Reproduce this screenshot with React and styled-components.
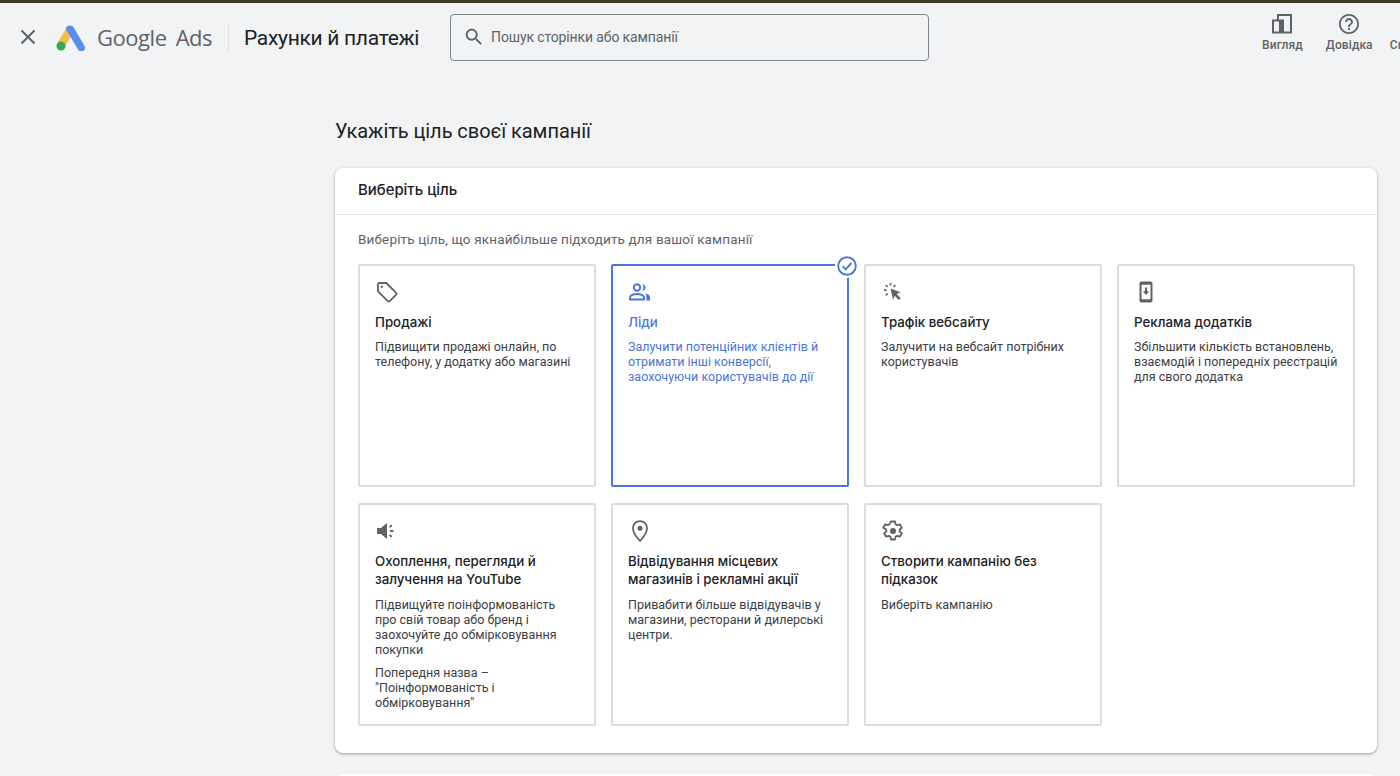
import React from 'react'
import styled, { createGlobalStyle } from 'styled-components'

const GlobalStyle = createGlobalStyle`
    html, body {
        margin: 0;
        height: 100%;
        overflow: hidden;
        background: #f1f3f4;
        font-family: Roboto, "Noto Sans", sans-serif;
    }
`

const goals = [
    {
        key: 'sales',
        title: 'Продажі',
        text: ['Підвищити продажі онлайн, по телефону, у додатку або магазині'],
        icon: (
            <>
                <path d="M3 4.2v7.1l9.9 9.9c.5.5 1.3.5 1.8 0l6.5-6.5c.5-.5.5-1.3 0-1.8L11.3 3H4.2C3.5 3 3 3.5 3 4.2z" fill="none" stroke="currentColor" strokeWidth="1.8" strokeLinejoin="round" />
                <circle cx="6.8" cy="6.8" r="1.2" fill="currentColor" />
            </>
        ),
    },
    {
        key: 'leads',
        title: 'Ліди',
        selected: true,
        text: ['Залучити потенційних клієнтів й отримати інші конверсії, заохочуючи користувачів до дії'],
        icon: (
            <>
                <circle cx="9" cy="7.5" r="3.2" fill="none" stroke="currentColor" strokeWidth="2" />
                <path d="M2 19.500v-2.100c0-2.200 3.600-3.500 7-3.500s7 1.300 7 3.500v2.100H2z" fill="none" stroke="currentColor" strokeWidth="2" strokeLinejoin="round" />
                <path d="M14.200 4.300c2 .2 3.400 1.500 3.400 3.300s-1.400 3.100-3.400 3.300c.8-.9 1.200-2 1.200-3.300s-.4-2.400-1.200-3.300zM17.300 13.600c2.400.5 4.700 1.600 4.700 3.600v3.300h-3.600v-3.300c0-1.500-.4-2.700-1.100-3.600z" fill="currentColor" />
            </>
        ),
    },
    {
        key: 'traffic',
        title: 'Трафік вебсайту',
        text: ['Залучити на вебсайт потрібних користувачів'],
        icon: (
            <>
                <path d="M9.500 8.500l10 3.800-3.900 1.600 4.200 4.300-1.900 1.900-4.200-4.300-1.600 3.900z" fill="currentColor" />
                <path d="M9.600 3v2.600M4.800 5l1.800 1.800M3 10.200h2.600M4.800 15.400l1.800-1.800M14.400 5l-1.800 1.800" fill="none" stroke="currentColor" strokeWidth="1.700" />
            </>
        ),
    },
    {
        key: 'apps',
        title: 'Реклама додатків',
        text: ['Збільшити кількість встановлень, взаємодій і попередніх реєстрацій для свого додатка'],
        icon: (
            <>
                <path fillRule="evenodd" d="M7.500 1.500h9c1.100 0 2 .9 2 2v17c0 1.100-.9 2-2 2h-9c-1.100 0-2-.9-2-2v-17c0-1.100.9-2 2-2zm0 3.200v14.600h9V4.700h-9z" fill="currentColor" />
                <path d="M11 7.500h2v3.700h2.200L12 15l-3.200-3.800H11z" fill="currentColor" />
            </>
        ),
    },
    {
        key: 'reach',
        title: 'Охоплення, перегляди й залучення на YouTube',
        text: [
            'Підвищуйте поінформованість про свій товар або бренд і заохочуйте до обмірковування покупки',
            'Попередня назва – "Поінформованість і обмірковування"',
        ],
        icon: (
            <>
                <path d="M2 9v6h4l6 5V4L6 9H2z" fill="currentColor" />
                <path d="M14.500 8l2.400-1.700M15 12h3.400M14.500 16l2.400 1.700" fill="none" stroke="currentColor" strokeWidth="1.800" />
            </>
        ),
    },
    {
        key: 'visits',
        title: 'Відвідування місцевих магазинів і рекламні акції',
        text: ['Привабити більше відвідувачів у магазини, ресторани й дилерські центри.'],
        icon: (
            <>
                <path d="M12 2.200c-3.900 0-7 3.100-7 7 0 5.100 7 12.800 7 12.800s7-7.700 7-12.800c0-3.900-3.100-7-7-7z" fill="none" stroke="currentColor" strokeWidth="1.800" strokeLinejoin="round" />
                <circle cx="12" cy="9.200" r="2.500" fill="currentColor" />
            </>
        ),
    },
    {
        key: 'custom',
        title: 'Створити кампанію без підказок',
        text: ['Виберіть кампанію'],
        icon: (
            <>
                <path d="M10 2.500h4l.5 2.700 1.700 1 2.600-.9 2 3.400-2.100 1.800v2l2.100 1.800-2 3.400-2.600-.9-1.700 1-.5 2.700h-4l-.5-2.700-1.700-1-2.600.9-2-3.400 2.100-1.800v-2L2.200 8.700l2-3.400 2.600.9 1.700-1z" fill="none" stroke="currentColor" strokeWidth="1.800" strokeLinejoin="round" />
                <circle cx="12" cy="12" r="3" fill="currentColor" />
            </>
        ),
    },
]

function App() {
    return (
        <>
            <GlobalStyle />
            <Page>
                <TopStrip />
                <Header>
                    <CloseButton aria-label="Закрити">
                        <svg width="24" height="24" viewBox="0 0 24 24">
                            <path d="M5.500 5.500l13 13M18.500 5.500l-13 13" stroke="currentColor" strokeWidth="2" />
                        </svg>
                    </CloseButton>
                    <Logo width="30" height="26" viewBox="0 0 30 26">
                        <path d="M10.600 2.400L1.200 18.600l7.200 4.200 9.400-16.200z" fill="#f4bd42" />
                        <path d="M10.800 5.800c-2-3.400.2-5.300 3.400-5.300 1.600 0 2.700.7 3.600 2.200l10.700 18.400c1 1.800.4 3.900-1.400 4.900s-3.900.4-4.900-1.300z" fill="#5b8def" />
                        <circle cx="5" cy="21" r="4.500" fill="#34a853" />
                    </Logo>
                    <Brand>Google<BrandAds>Ads</BrandAds></Brand>
                    <Divider />
                    <PageTitle>Рахунки й платежі</PageTitle>
                    <SearchBox>
                        <svg width="22" height="22" viewBox="0 0 24 24">
                            <path d="M15.500 14h-.8l-.3-.3c1-1.100 1.600-2.600 1.600-4.200C16 5.900 13.100 3 9.500 3S3 5.900 3 9.500 5.900 16 9.500 16c1.600 0 3.100-.6 4.200-1.600l.3.3v.8l5 5 1.500-1.500-5-5zm-6 0C7 14 5 12 5 9.500S7 5 9.500 5 14 7 14 9.500 12 14 9.500 14z" fill="#5f6368" />
                        </svg>
                        <SearchText>Пошук сторінки або кампанії</SearchText>
                    </SearchBox>
                    <Tools>
                        <ToolButton>
                            <svg width="24" height="24" viewBox="0 0 24 24">
                                <path fillRule="evenodd" d="M2 21.500V7.500h5V2h15v19.500H2zm2-2h5V9.500H4v10zM9 4v3.500h5V4H9zm5 1.500v14h6V4h-6z" fill="#5f6368" />
                                <path d="M9 9.500h5v10H9z" fill="#5f6368" />
                            </svg>
                            Вигляд
                        </ToolButton>
                        <ToolButton $wide>
                            <svg width="24" height="24" viewBox="0 0 24 24">
                                <path d="M12 2C6.480 2 2 6.480 2 12s4.480 10 10 10 10-4.480 10-10S17.520 2 12 2zm0 18.200c-4.520 0-8.200-3.680-8.200-8.200S7.480 3.800 12 3.800s8.200 3.680 8.200 8.200-3.680 8.200-8.200 8.200zM11 16h2v2h-2zm1-10c-2.200 0-4 1.800-4 4h2c0-1.100.9-2 2-2s2 .9 2 2c0 2-3 1.750-3 5h2c0-2.250 3-2.500 3-5 0-2.200-1.800-4-4-4z" fill="#5f6368" />
                            </svg>
                            Довідка
                        </ToolButton>
                        <ToolButton>
                            <Blank />
                            Сповіщення
                        </ToolButton>
                    </Tools>
                </Header>
                <Main>
                    <Heading>Укажіть ціль своєї кампанії</Heading>
                    <Card>
                        <CardHeader>Виберіть ціль</CardHeader>
                        <CardBody>
                            <Hint>Виберіть ціль, що якнайбільше підходить для вашої кампанії</Hint>
                            <GoalGrid>
                                {goals.map(goal => (
                                    <Goal key={goal.key} $selected={goal.selected}>
                                        {goal.selected && (
                                            <CheckBadge>
                                                <svg width="20" height="20" viewBox="0 0 20 20">
                                                    <circle cx="10" cy="10" r="8.800" fill="#fff" stroke="#4a76d9" strokeWidth="1.900" />
                                                    <path d="M5.600 10.200l3.100 3.100 5.700-6.300" fill="none" stroke="#4a76d9" strokeWidth="1.900" />
                                                </svg>
                                            </CheckBadge>
                                        )}
                                        <GoalIcon $selected={goal.selected} width="24" height="24" viewBox="0 0 24 24">{goal.icon}</GoalIcon>
                                        <GoalTitle $selected={goal.selected}>{goal.title}</GoalTitle>
                                        {goal.text.map(line => <GoalText key={line}>{line}</GoalText>)}
                                    </Goal>
                                ))}
                            </GoalGrid>
                        </CardBody>
                    </Card>
                    <NextCard />
                </Main>
            </Page>
        </>
    )
}

export default App

const Page = styled.div`
    height: 776px;
    overflow: hidden;
    background: #f1f3f4;
    color: #202124;
`
const TopStrip = styled.div`
    height: 3px;
    background: #3d3826;
`
const Header = styled.header`
    height: 69px;
    display: flex;
    align-items: center;
    padding-left: 16px;
    box-sizing: border-box;
    overflow: hidden;
`
const CloseButton = styled.div`
    flex: none;
    width: 24px;
    height: 24px;
    color: #5f6368;
    margin-bottom: 1px;
`
const Logo = styled.svg`
    margin-left: 16px;
    flex: none;
`
const Brand = styled.div`
    flex: none;
    width: 115px;
    margin-left: 11px;
    margin-bottom: 2px;
    font-family: "Open Sans", sans-serif;
    font-size: 22px;
    letter-spacing: -0.450px;
    color: #5f6368;
    white-space: nowrap;
`
const BrandAds = styled.span`
    margin-left: 9px;
`
const Divider = styled.div`
    flex: none;
    width: 1px;
    height: 30px;
    margin-left: 16px;
    background: #e0e2e5;
`
const PageTitle = styled.div`
    flex: none;
    margin-left: 15px;
    font-size: 21px;
    letter-spacing: -0.300px;
    color: #202124;
    white-space: nowrap;
`
const SearchBox = styled.div`
    flex: none;
    width: 479px;
    height: 47px;
    box-sizing: border-box;
    margin-left: 31px;
    display: flex;
    align-items: center;
    gap: 6px;
    padding-left: 12px;
    border: 1px solid #80868b;
    border-radius: 4px;
    margin-bottom: 1px;
`
const SearchText = styled.span`
    font-size: 14px;
    letter-spacing: -0.130px;
    color: #5f6368;
`
const Tools = styled.div`
    flex: none;
    margin-left: 333px;
    margin-bottom: 11px;
    display: flex;
    gap: 17px;
`
const ToolButton = styled.div`
    display: flex;
    flex-direction: column;
    align-items: center;
    gap: 2px;
    margin-left: ${p => p.$wide ? '6px' : '0'};
    font-size: 12px;
    line-height: 14px;
    font-weight: 500;
    letter-spacing: 0.100px;
    color: #5f6368;
    white-space: nowrap;
`
const Blank = styled.div`
    height: 24px;
`
const Main = styled.main`
    padding-left: 335px;
    padding-right: 23px;
`
const Heading = styled.h1`
    margin: 0;
    padding-top: 46px;
    height: 50px;
    font-size: 20px;
    line-height: 26px;
    font-weight: 400;
    letter-spacing: -0.050px;
    color: #202124;
`
const Card = styled.section`
    height: 585px;
    box-sizing: border-box;
    background: #fff;
    border-radius: 8px;
    box-shadow: 0 1px 2px rgba(60, 64, 67, 0.3), 0 1px 3px 1px rgba(60, 64, 67, 0.15);
`
const CardHeader = styled.div`
    height: 47px;
    box-sizing: border-box;
    padding: 0 23px 2px;
    display: flex;
    align-items: center;
    border-bottom: 1px solid #e8eaed;
    font-family: Inter, Roboto, sans-serif;
    font-size: 14.900px;
    font-weight: 500;
    color: #202124;
`
const CardBody = styled.div`
    padding: 0 23px;
`
const Hint = styled.div`
    height: 49px;
    box-sizing: border-box;
    padding-bottom: 2px;
    display: flex;
    align-items: center;
    font-size: 13.500px;
    letter-spacing: 0.150px;
    color: #5f6368;
`
const GoalGrid = styled.div`
    display: grid;
    grid-template-columns: repeat(4, 238px);
    grid-auto-rows: 223px;
    column-gap: 15px;
    row-gap: 16px;
`
const Goal = styled.div`
    position: relative;
    box-sizing: border-box;
    padding: 14px 15px 0 15px;
    border: ${p => p.$selected ? '2px solid #4a76d9' : '2px solid #dadce0'};
    border-radius: 2px;
    color: ${p => p.$selected ? '#4a76d9' : '#3c4043'};
`
const CheckBadge = styled.div`
    position: absolute;
    top: -12px;
    right: -12px;
    padding: 2px;
    width: 20px;
    height: 20px;
    background: #fff;
    border-radius: 50%;
    line-height: 0;
`
const GoalIcon = styled.svg`
    display: block;
    color: ${p => p.$selected ? '#4a76d9' : '#5f6368'};
`
const GoalTitle = styled.div`
    margin-top: 8.500px;
    font-family: Inter, Roboto, sans-serif;
    font-size: 13.300px;
    line-height: 18.500px;
    font-weight: 500;
    color: ${p => p.$selected ? '#4a76d9' : '#202124'};
`
const GoalText = styled.p`
    margin: 8px 0 0;
    font-size: 12.500px;
    line-height: 15px;
    letter-spacing: 0;
`
const NextCard = styled.div`
    height: 20px;
    margin-top: 21px;
    background: #fff;
    border-radius: 8px 8px 0 0;
    box-shadow: 0 1px 2px rgba(60, 64, 67, 0.3);
`
